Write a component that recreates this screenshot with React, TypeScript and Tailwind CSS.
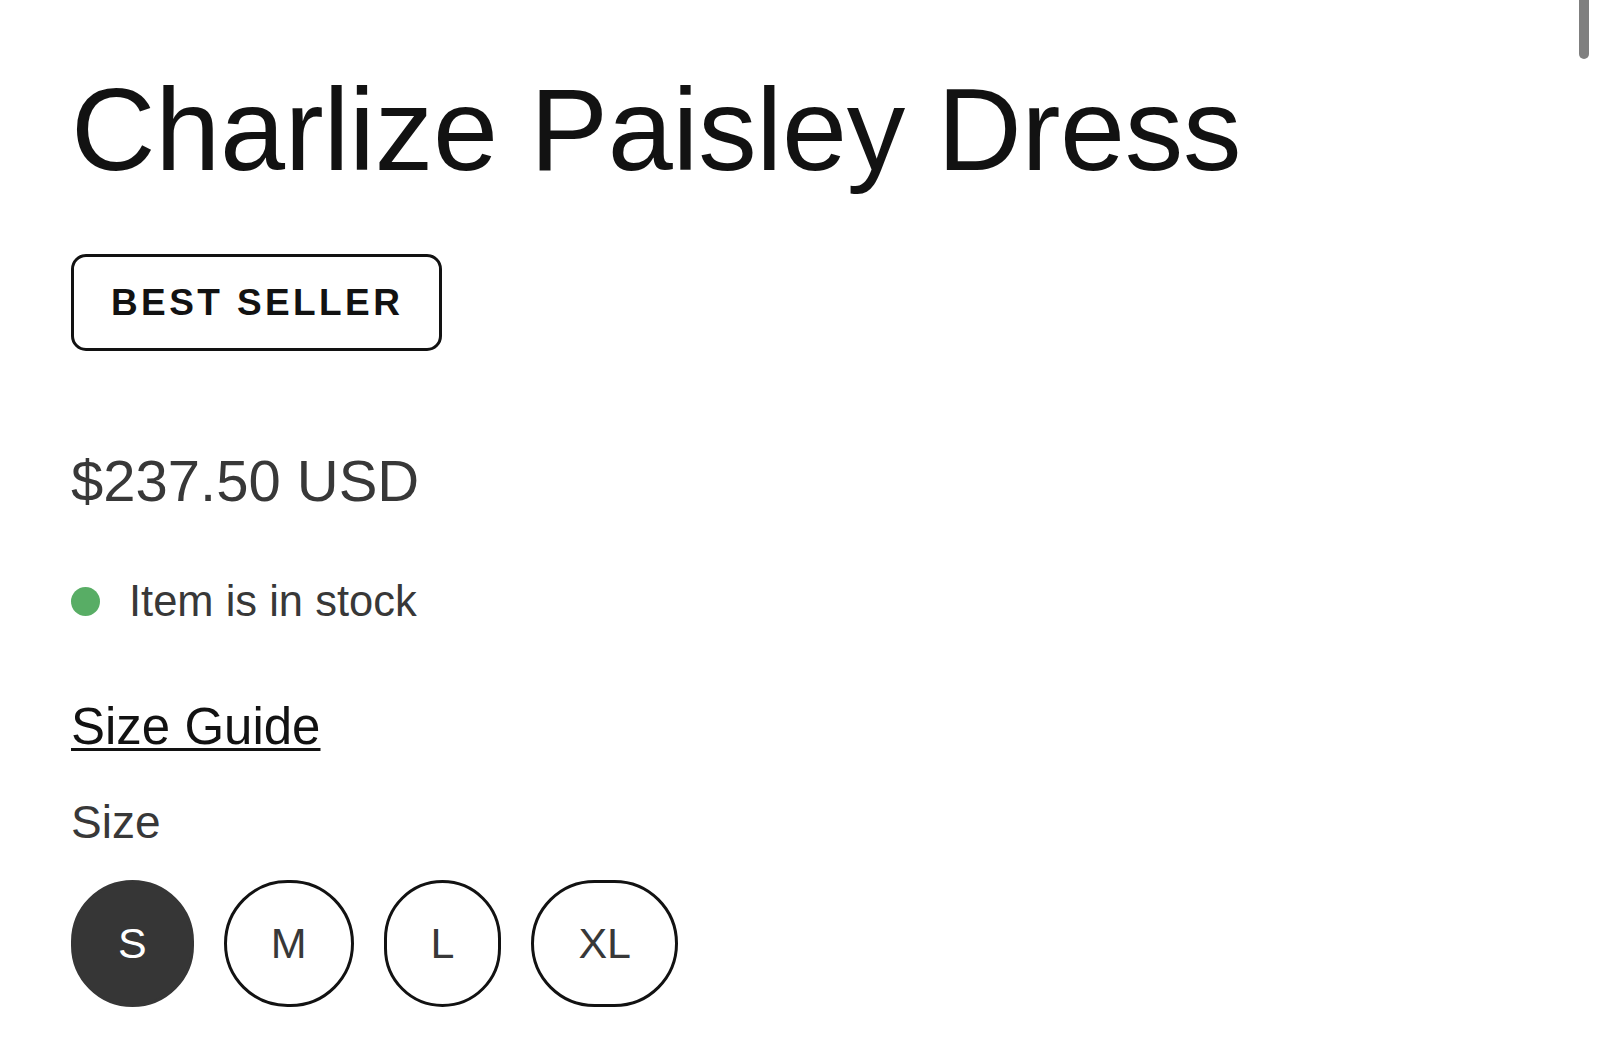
import React from "react";

const sizes = ["S", "M", "L", "XL"];

export default function App() {
  return (
    <div className="relative min-h-[1063px] w-full overflow-hidden bg-white font-['Liberation_Sans',Arial,sans-serif] text-[#121212]">
      <div className="flex flex-col items-start pl-[71px] pt-[71px]">
        <h1 className="text-[117px] leading-none font-normal text-[#121212] tracking-[-0.3px]">
          Charlize Paisley Dress
        </h1>

        <div className="mt-[66px] flex h-[97px] w-[371px] items-center rounded-[15px] border-[3px] border-[#121212] pl-[37px]">
          <span className="text-[37px] leading-none font-bold tracking-[3.4px] text-[#121212]">
            BEST SELLER
          </span>
        </div>

        <div className="mt-[100.9px] text-[58px] leading-none text-[#383838]">
          $237.50 USD
        </div>

        <div className="mt-[70.3px] flex items-center gap-[29px]">
          <span className="block h-[29px] w-[29px] rounded-full bg-[#58ad65]" />
          <span className="text-[43.5px] leading-none text-[#383838]">Item is in stock</span>
        </div>

        <a
          href="#"
          className="mt-[77.1px] text-[51px] leading-none text-[#121212] underline decoration-[2.5px] underline-offset-4"
        >
          Size Guide
        </a>

        <div className="mt-[47.3px] text-[46px] leading-none text-[#383838]">Size</div>

        <div className="mt-[34.9px] flex gap-[30px]">
          {sizes.map((s, i) => (
            <div
              key={s}
              className={
                i === 0
                  ? "flex h-[127px] items-center justify-center rounded-full border-[3px] border-[#363636] bg-[#363636] px-[44px] text-[43px] leading-none text-white"
                  : "flex h-[127px] items-center justify-center rounded-full border-[3px] border-[#121212] bg-white px-[44px] text-[43px] leading-none text-[#383838]"
              }
            >
              {s}
            </div>
          ))}
        </div>
      </div>

      <div className="absolute right-[11px] top-0 h-[59px] w-[10px] rounded-b-full bg-[#7f7f7f]" />
    </div>
  );
}
